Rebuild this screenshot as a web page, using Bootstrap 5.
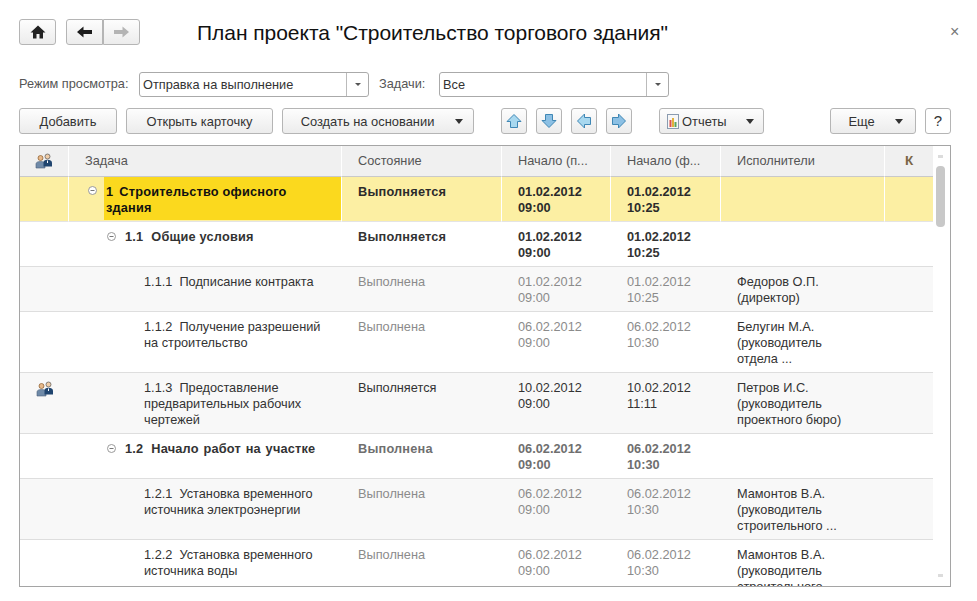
<!DOCTYPE html>
<html lang="ru"><head><meta charset="utf-8"><title>План проекта</title>
<link rel="stylesheet" href="https://cdn.jsdelivr.net/npm/bootstrap@5.3.0/dist/css/bootstrap.min.css">
<style>
html,body{height:100%;overflow:hidden}
body{font-family:"Liberation Sans",Arial,sans-serif;font-size:12.75px;color:#333;background:#fff}
.pg{width:977px;height:601px;padding:19px 26px 14px 19px;position:relative}
.ubtn{font-size:12.9px;line-height:16px;color:#333;height:26px;padding:0;border:1px solid #b5b5b5;border-radius:3px;background:linear-gradient(#fdfdfd,#ececec);display:inline-flex;align-items:center;justify-content:center;--bs-btn-hover-bg:#f4f4f4}
.ubtn .lbl{position:relative;top:1px}
.caretx{width:0;height:0;border-left:4.5px solid transparent;border-right:4.5px solid transparent;border-top:5px solid #333;display:inline-block}
.topbar{height:26px}
.ttl{font-size:21px;line-height:28px;color:#111;margin:2px 0 0 57px;font-weight:400;letter-spacing:-.04px}
.closex{position:absolute;left:950px;top:24px;color:#777;font-size:16px;line-height:16px}
.filt{margin-top:26px;height:26px;color:#555}
.combo{height:25px;width:230px;border:1px solid #aaa;border-radius:3px;display:flex;background:#fff;color:#333}
.combo span:first-child{flex:1;padding:0 3px;line-height:23px}
.combo .drop{width:22px;border-left:1px solid #bbb;display:flex;align-items:center;justify-content:center}
.combo .caretx{border-left-width:3px;border-right-width:3px;border-top-width:3px;border-top-color:#555}
.lab1{width:120px}.lab2{width:60px;margin-left:10px}
.tools{margin-top:11px;height:26px}
.gridbox{margin-top:11px;width:932px;height:442px;border:1px solid #a5a5a5;overflow:hidden;display:flex}
.gridwrap{width:914px;height:440px;overflow:hidden}
.tb{table-layout:fixed;width:914px;margin:0;border-collapse:separate;border-spacing:0;font-size:12.75px;line-height:16px}
.tb th{font-weight:400;background:#f0f0f0;color:#555;height:31px;padding:0 16px;vertical-align:middle;border-right:1px solid #fff;border-bottom:1px solid #c9c9c9;white-space:nowrap;overflow:hidden}
.tb th.kk{color:#7b6545;font-weight:700;text-align:center;padding:0;font-size:13.5px}
.tb td{padding:7px 16px 5px;vertical-align:top;border-bottom:1px solid #dedede;color:#333;background:#fff}
.tb tr.st td{background:#f8f8f8}
.tb tr.cur td{background:#fcefa3;border-right:1px solid #fff;color:#2b2b2b;border-bottom-color:#e4e4e4}
.tb td.ic,.tb th.ic{padding:0;text-align:center}
.tb td.ic{padding-top:7px}
.tb td.tk{padding:7px 0 5px}
.tb tr.cur td.tk{padding:0}
.tb .dim{color:#8b8b8b}
.tb .dimb{color:#6f6f6f;font-weight:700}
.tb .bo{font-weight:700}
tr.bo td.tk,tr.bo td:nth-child(3){letter-spacing:.2px}
.wsp{word-spacing:1px}
.num{margin-right:8px}
.selc .num{margin-right:6px}
.l2{padding-left:38px}.l3{padding-left:75px}
.tsk{display:flex}
.tog{width:16px;flex:none;padding-top:3px;line-height:0}
.l2 .tog{width:18px}
.selc{flex:1;background:#fbd91e;padding:7px 2px 5px;color:#111;height:43px}
.sbar{width:17px;position:relative;background:#fff}
.thumb{position:absolute;left:3px;top:20px;width:9px;height:61px;background:#c8c8c8;border-radius:4px}
.ar{position:absolute;left:5px;width:5px;height:3px;background:#dcdcdc}
.ico{display:block}
</style></head><body>
<div class="pg">
 <div class="topbar d-flex align-items-center">
  <button class="btn ubtn" style="width:37px" aria-label="Домой"><svg class="ico" width="16" height="14" viewBox="0 0 16 14"><path d="M8 0.5 15.5 7.5H13V13.5H9.5V9H6.5V13.5H3V7.5H.5Z" fill="#222"/></svg></button>
  <div class="btn-group" style="margin-left:10px">
   <button class="btn ubtn" style="width:37px;border-radius:3px 0 0 3px" aria-label="Назад"><svg class="ico" width="15" height="12" viewBox="0 0 15 12"><path d="M0 6 6.5 .5V4H15V8H6.5V11.5Z" fill="#1c1c1c"/></svg></button>
   <button class="btn ubtn" style="width:37px;margin-left:0;border-radius:0 3px 3px 0" aria-label="Вперед"><svg class="ico" width="15" height="12" viewBox="0 0 15 12"><path d="M15 6 8.500 .5V4H0V8H8.500V11.500Z" fill="#b4b4b4"/></svg></button>
  </div>
  <h1 class="ttl">План проекта "Строительство торгового здания"</h1>
 </div>
 <span class="closex">×</span>

 <div class="filt d-flex align-items-center">
  <span class="lab1">Режим просмотра:</span>
  <div class="combo"><span>Отправка на выполнение</span><span class="drop"><i class="caretx"></i></span></div>
  <span class="lab2">Задачи:</span>
  <div class="combo"><span>Все</span><span class="drop"><i class="caretx"></i></span></div>
 </div>

 <div class="tools d-flex">
  <button class="btn ubtn" style="width:98px"><span class="lbl">Добавить</span></button>
  <button class="btn ubtn" style="width:147px;margin-left:9px"><span class="lbl">Открыть карточку</span></button>
  <button class="btn ubtn" style="width:192px;margin-left:9px;gap:21px;padding-left:8px"><span class="lbl">Создать на основании</span><i class="caretx"></i></button>
  <button class="btn ubtn" style="width:26px;margin-left:27px" aria-label="Вверх"><svg width="16" height="16" viewBox="0 0 16 16"><path d="M8 1.500 15 8.500H11.500V14.500H4.500V8.500H1Z" fill="#a8d8ef" stroke="#3f87b5"/></svg></button>
  <button class="btn ubtn" style="width:26px;margin-left:9px" aria-label="Вниз"><svg width="16" height="16" viewBox="0 0 16 16"><path d="M8 14.500 15 7.500H11.500V1.500H4.500V7.500H1Z" fill="#8cc0e4" stroke="#3f87b5"/></svg></button>
  <button class="btn ubtn" style="width:26px;margin-left:9px" aria-label="Влево"><svg width="16" height="16" viewBox="0 0 16 16"><path d="M1.500 8 8.500 1V4.500H14.500V11.500H8.500V15Z" fill="#a8d8ef" stroke="#3f87b5"/></svg></button>
  <button class="btn ubtn" style="width:26px;margin-left:9px" aria-label="Вправо"><svg width="16" height="16" viewBox="0 0 16 16"><path d="M14.500 8 7.500 1V4.500H1.500V11.500H7.500V15Z" fill="#8cc0e4" stroke="#3f87b5"/></svg></button>
  <button class="btn ubtn" style="width:105px;margin-left:27px;gap:2px;justify-content:flex-start;padding-left:6px"><svg width="14" height="15" viewBox="0 0 14 15"><rect x="1.500" y=".5" width="11" height="14" fill="#f7f7f7" stroke="#8a9bb0"/><rect x="3.500" y="6" width="2" height="7" fill="#d9534f"/><rect x="6" y="4" width="2" height="9" fill="#e2b13c"/><rect x="8.500" y="8" width="2" height="5" fill="#5aa45a"/></svg><span class="lbl">Отчеты</span><i class="caretx" style="margin-left:17px"></i></button>
  <button class="btn ubtn ms-auto" style="width:86px;gap:20px;padding-left:5px"><span class="lbl">Еще</span><i class="caretx"></i></button>
  <button class="btn ubtn" style="width:26px;margin-left:9px;background:#fff;font-size:15px">?</button>
 </div>

 <div class="gridbox">
  <div class="gridwrap">
   <table class="table tb">
    <colgroup><col style="width:49px"><col style="width:273px"><col style="width:160px"><col style="width:109px"><col style="width:110px"><col style="width:164px"><col style="width:49px"></colgroup>
    <thead><tr>
     <th class="ic"><svg width="18" height="16" viewBox="0 0 18 16"><use href="#ppl"/></svg></th><th>Задача</th><th>Состояние</th><th>Начало (п...</th><th>Начало (ф...</th><th>Исполнители</th><th class="kk">К</th>
    </tr></thead>
    <tbody>
     <tr class="cur bo"><td class="ic"></td><td class="tk"><div class="tsk" style="padding-left:19px"><span class="tog" style="padding-top:9px"><svg width="9" height="9" viewBox="0 0 9 9"><circle cx="4.500" cy="4.500" r="4" fill="#fff" stroke="#999"/><path d="M2.500 4.500H6.500" stroke="#777"/></svg></span><div class="selc"><span class="num">1</span>Строительство офисного<br>здания</div></div></td><td>Выполняется</td><td>01.02.2012<br>09:00</td><td>01.02.2012<br>10:25</td><td></td><td></td></tr>
     <tr class="bo"><td class="ic"></td><td class="tk"><div class="tsk l2"><span class="tog"><svg width="9" height="9" viewBox="0 0 9 9"><circle cx="4.500" cy="4.500" r="4" fill="#fff" stroke="#999"/><path d="M2.500 4.500H6.500" stroke="#777"/></svg></span><div><span class="num">1.1</span>Общие условия</div></div></td><td>Выполняется</td><td>01.02.2012<br>09:00</td><td>01.02.2012<br>10:25</td><td></td><td></td></tr>
     <tr class="st"><td class="ic"></td><td class="tk"><div class="tsk l3">1.1.1&nbsp; Подписание контракта</div></td><td class="dim">Выполнена</td><td class="dim">01.02.2012<br>09:00</td><td class="dim">01.02.2012<br>10:25</td><td>Федоров О.П.<br>(директор)</td><td></td></tr>
     <tr><td class="ic"></td><td class="tk"><div class="tsk l3"><div>1.1.2&nbsp; Получение разрешений<br>на строительство</div></div></td><td class="dim">Выполнена</td><td class="dim">06.02.2012<br>09:00</td><td class="dim">06.02.2012<br>10:30</td><td>Белугин М.А.<br>(руководитель<br>отдела ...</td><td></td></tr>
     <tr class="st"><td class="ic"><svg width="18" height="16" viewBox="0 0 18 16"><use href="#ppl"/></svg></td><td class="tk"><div class="tsk l3"><div>1.1.3&nbsp; Предоставление<br>предварительных рабочих<br>чертежей</div></div></td><td>Выполняется</td><td>10.02.2012<br>09:00</td><td>10.02.2012<br>11:11</td><td>Петров И.С.<br>(руководитель<br>проектного бюро)</td><td></td></tr>
     <tr class="bo"><td class="ic"></td><td class="tk"><div class="tsk l2"><span class="tog"><svg width="9" height="9" viewBox="0 0 9 9"><circle cx="4.500" cy="4.500" r="4" fill="#fff" stroke="#999"/><path d="M2.500 4.500H6.500" stroke="#777"/></svg></span><div><span class="num">1.2</span><span class="wsp">Начало работ на участке</span></div></div></td><td class="dimb">Выполнена</td><td class="dimb">06.02.2012<br>09:00</td><td class="dimb">06.02.2012<br>10:30</td><td></td><td></td></tr>
     <tr class="st"><td class="ic"></td><td class="tk"><div class="tsk l3"><div>1.2.1&nbsp; Установка временного<br>источника электроэнергии</div></div></td><td class="dim">Выполнена</td><td class="dim">06.02.2012<br>09:00</td><td class="dim">06.02.2012<br>10:30</td><td>Мамонтов В.А.<br>(руководитель<br>строительного ...</td><td></td></tr>
     <tr><td class="ic"></td><td class="tk"><div class="tsk l3"><div>1.2.2&nbsp; Установка временного<br>источника воды</div></div></td><td class="dim">Выполнена</td><td class="dim">06.02.2012<br>09:00</td><td class="dim">06.02.2012<br>10:30</td><td>Мамонтов В.А.<br>(руководитель<br>строительного ...</td><td></td></tr>
    </tbody>
   </table>
  </div>
  <div class="sbar"><span class="ar" style="top:9px"></span><span class="thumb"></span><span class="ar" style="bottom:9px"></span></div>
 </div>
</div>
<svg width="0" height="0" style="position:absolute"><defs><g id="ppl">
 <circle cx="5.500" cy="5" r="2.500" fill="#e7b98a" stroke="#8a5a2b" stroke-width=".7"/>
 <path d="M1 15V11Q1 8.500 5.500 8.500T10 11V15Z" fill="#6f8aa8" stroke="#4a5f78" stroke-width=".6"/>
 <circle cx="12.500" cy="3.500" r="2.500" fill="#f0cda8" stroke="#555" stroke-width=".7"/>
 <path d="M8.500 13.500V9.500Q8.500 6.800 12.500 6.800T17 9.500V13.500Z" fill="#20456f"/>
 <path d="M12.500 7.500V10" stroke="#fff"/>
</g></defs></svg>
<script src="https://cdn.jsdelivr.net/npm/bootstrap@5.3.0/dist/js/bootstrap.bundle.min.js"></script>
</body></html>
